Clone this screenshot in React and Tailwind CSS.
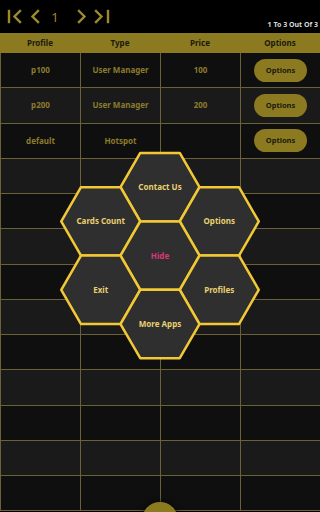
import React from 'react'

const ROWS = [
  { profile: 'p100', type: 'User Manager', price: '100' },
  { profile: 'p200', type: 'User Manager', price: '200' },
  { profile: 'default', type: 'Hotspot', price: '' },
]

const R = 39.5
const H = Math.sqrt(3) * R

const HEXES = [
  { label: 'Contact Us', cx: 160, cy: 187.2 },
  { label: 'Cards Count', cx: 100.75, cy: 221.4 },
  { label: 'Options', cx: 219.25, cy: 221.4 },
  { label: 'Hide', cx: 160, cy: 255.6, pink: true },
  { label: 'Exit', cx: 100.75, cy: 289.8 },
  { label: 'Profiles', cx: 219.25, cy: 289.8 },
  { label: 'More Apps', cx: 160, cy: 324 },
]

function hexPoints(cx, cy) {
  const pts = [
    [cx - R, cy],
    [cx - R / 2, cy - H / 2],
    [cx + R / 2, cy - H / 2],
    [cx + R, cy],
    [cx + R / 2, cy + H / 2],
    [cx - R / 2, cy + H / 2],
  ]
  return pts.map(p => p.join(',')).join(' ')
}

function Pager() {
  return (
    <svg width="120" height="33" viewBox="0 0 120 33" className="text-[#9c8a2e]">
      <g stroke="currentColor" strokeWidth="2.4" fill="none" strokeLinecap="square">
        <line x1="9" y1="11" x2="9" y2="22" />
        <polyline points="20,11 14.5,16.5 20,22" />
        <polyline points="38,11 32.5,16.5 38,22" />
        <polyline points="79,11 84.5,16.5 79,22" />
        <polyline points="96,11 101.5,16.5 96,22" />
        <line x1="108" y1="11" x2="108" y2="22" />
      </g>
      <text x="55" y="21.5" fill="currentColor" fontSize="13" textAnchor="middle" fontFamily="Noto Sans, sans-serif">1</text>
    </svg>
  )
}

export default function App() {
  const rows = Array.from({ length: 13 }, (_, i) => ROWS[i] || null)
  return (
    <div className="relative w-[320px] h-[512px] overflow-hidden bg-black" style={{ fontFamily: '"Noto Sans", sans-serif' }}>
      <div className="h-[33px] flex items-start justify-between">
        <Pager />
        <span className="mt-[20px] mr-[2px] text-[7px] font-bold text-[#d8d8d8]">1 To 3 Out Of 3</span>
      </div>
      <div className="h-[20px] grid grid-cols-4 bg-[#8b7a1f] text-[8px] font-bold text-[#1c1a10]">
        <div className="flex items-center justify-center">Profile</div>
        <div className="flex items-center justify-center">Type</div>
        <div className="flex items-center justify-center">Price</div>
        <div className="flex items-center justify-center">Options</div>
      </div>
      <div className="bg-[#6a6139] pl-px">
        {rows.map((r, i) => (
          <div key={i} className="h-[35.25px] grid grid-cols-4 gap-px pb-px">
            {[0, 1, 2, 3].map(c => (
              <div key={c} className={`flex items-center justify-center text-[8px] font-bold text-[#8c7b2c] ${i % 2 ? 'bg-[#1a1a1a]' : 'bg-[#0f0f0f]'}`}>
                {r && c === 0 && r.profile}
                {r && c === 1 && r.type}
                {r && c === 2 && r.price}
                {r && c === 3 && (
                  <span className="w-[53px] h-[23px] rounded-full bg-[#8b7a1f] flex items-center justify-center text-[7.5px] text-[#1c1a10]">Options</span>
                )}
              </div>
            ))}
          </div>
        ))}
      </div>
      <svg className="absolute inset-0" width="320" height="512" viewBox="0 0 320 512">
        {HEXES.map(h => (
          <polygon key={h.label} points={hexPoints(h.cx, h.cy)} fill="#2f2f2f" stroke="#f2c935" strokeWidth="2.5" strokeLinejoin="round" />
        ))}
        {HEXES.map(h => (
          <text key={h.label} x={h.cx} y={h.cy + 3} textAnchor="middle" fontSize="8" fontWeight="700" fill={h.pink ? '#d6387a' : '#ead070'} fontFamily="Noto Sans, sans-serif">{h.label}</text>
        ))}
      </svg>
      <div className="absolute left-[142px] top-[502px] w-[36px] h-[36px] rounded-full bg-[#8b7a1f] shadow-[0_0_6px_rgba(0,0,0,0.8)]" />
    </div>
  )
}
